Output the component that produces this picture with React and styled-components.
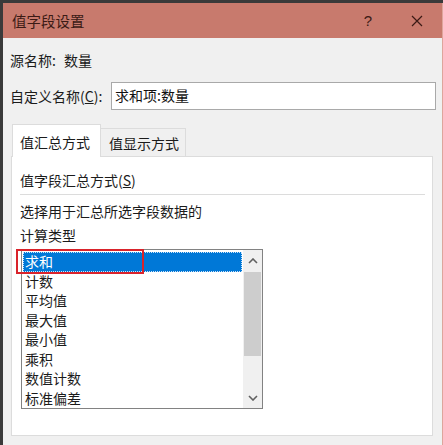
import styled, { createGlobalStyle } from 'styled-components';

const GlobalStyle = createGlobalStyle`
  html, body {
    margin: 0;
    padding: 0;
    background: #3a3a3a;
  }
  body {
    font-family: "Noto Sans CJK SC", "Noto Sans", "Liberation Sans", sans-serif;
    font-size: 14px;
    color: #1b1b1b;
  }
`;

const items = ['求和', '计数', '平均值', '最大值', '最小值', '乘积', '数值计数', '标准偏差'];

function App() {
  return (
    <Page>
      <GlobalStyle />
      <Window>
        <TitleBar>
          <Title>值字段设置</Title>
          <HelpBtn>?</HelpBtn>
          <CloseBtn>
            <svg width="12" height="12" viewBox="0 0 12 12">
              <path d="M1 1 L11 11 M11 1 L1 11" stroke="#3b1a15" strokeWidth="1.2" fill="none" />
            </svg>
          </CloseBtn>
        </TitleBar>

        <Content>
          <SourceRow>
            <span>源名称:</span>
            <SourceValue>数量</SourceValue>
          </SourceRow>

          <NameRow>
            <NameLabel>
              自定义名称(<u>C</u>):
            </NameLabel>
            <NameInput>求和项:数量</NameInput>
          </NameRow>
        </Content>

        <TabsArea>
          <TabRow>
            <Tab $active>值汇总方式</Tab>
            <Tab>值显示方式</Tab>
          </TabRow>
          <Panel>
            <SectionTitle>
              值字段汇总方式(<u>S</u>)
            </SectionTitle>
            <Separator />
            <Hint $first>选择用于汇总所选字段数据的</Hint>
            <Hint>计算类型</Hint>
            <ListBox>
              <Items>
                {items.map((it, i) => (
                  <Item key={it} $selected={i === 0}>
                    {it}
                  </Item>
                ))}
              </Items>
              <ScrollBar>
                <Arrow>
                  <svg width="10" height="6" viewBox="0 0 10 6">
                    <path d="M1 5 L5 1 L9 5" stroke="#606060" strokeWidth="1.6" fill="none" />
                  </svg>
                </Arrow>
                <Track>
                  <Thumb />
                </Track>
                <Arrow>
                  <svg width="10" height="6" viewBox="0 0 10 6">
                    <path d="M1 1 L5 5 L9 1" stroke="#606060" strokeWidth="1.6" fill="none" />
                  </svg>
                </Arrow>
              </ScrollBar>
              <Highlight />
            </ListBox>
          </Panel>
        </TabsArea>
      </Window>
    </Page>
  );
}

export default App;

const Page = styled.div`
  width: 443px;
  height: 445px;
  padding: 3px 0 0 3px;
  box-sizing: border-box;
  overflow: hidden;
`;

const Window = styled.div`
  width: 439px;
  height: 442px;
  background: #f0f0f0;
  border-right: 1px solid #dea59c;
  display: flex;
  flex-direction: column;
`;

const TitleBar = styled.div`
  height: 35px;
  background: #c87a6d;
  display: flex;
  align-items: center;
  padding-left: 9px;
  color: #3b1a15;
`;

const Title = styled.div`
  flex: 1;
  font-size: 14.5px;
  line-height: 20px;
`;

const HelpBtn = styled.div`
  width: 20px;
  font-family: "Liberation Sans", sans-serif;
  font-size: 15px;
  text-align: center;
  margin-right: 33px;
`;

const CloseBtn = styled.div`
  display: flex;
  align-items: center;
  margin-right: 19px;
`;

const Content = styled.div`
  padding: 0 6px 0 7px;
`;

const SourceRow = styled.div`
  margin-top: 12px;
  line-height: 20px;
  display: flex;
`;

const SourceValue = styled.span`
  margin-left: 8px;
`;

const NameRow = styled.div`
  margin-top: 12px;
  display: flex;
  align-items: center;
`;

const NameLabel = styled.div`
  width: 101px;
  line-height: 20px;
  flex-shrink: 0;
`;

const NameInput = styled.div`
  flex: 1;
  height: 28px;
  box-sizing: border-box;
  border: 1px solid #a9a9a9;
  background: #fff;
  padding-left: 3px;
  line-height: 24px;
  color: #111;
`;

const TabsArea = styled.div`
  margin: 14px 9px 0 8px;
  display: flex;
  flex-direction: column;
`;

const TabRow = styled.div`
  display: flex;
  align-items: flex-end;
  padding-left: 1px;
  position: relative;
  z-index: 1;
  margin-bottom: -1px;
`;

const Tab = styled.div`
  width: ${(p) => (p.$active ? '89px' : '85px')};
  height: ${(p) => (p.$active ? '33px' : '29px')};
  box-sizing: border-box;
  border: 1px solid #dcdcdc;
  border-bottom: ${(p) => (p.$active ? 'none' : '1px solid #dcdcdc')};
  border-left: ${(p) => (p.$active ? '1px solid #dcdcdc' : 'none')};
  background: ${(p) => (p.$active ? '#fff' : '#f0f0f0')};
  padding-left: ${(p) => (p.$active ? '7px' : '8px')};
  padding-top: ${(p) => (p.$active ? '7px' : '4px')};
  line-height: 20px;
`;

const Panel = styled.div`
  height: 280px;
  box-sizing: border-box;
  border: 1px solid #dcdcdc;
  background: #fff;
  padding: 0 7px 0 8px;
`;

const SectionTitle = styled.div`
  margin-top: 13px;
  line-height: 20px;
`;

const Separator = styled.div`
  margin-top: 4px;
  height: 1px;
  background: #dcdcdc;
`;

const Hint = styled.div`
  line-height: 24px;
  margin-top: ${(p) => (p.$first ? '4px' : '0')};
`;

const ListBox = styled.div`
  position: relative;
  margin-top: 2px;
  margin-left: 1px;
  width: 242px;
  height: 160px;
  box-sizing: border-box;
  border: 1px solid #828282;
  display: flex;
`;

const Items = styled.div`
  flex: 1;
  padding: 2px 1px 0 1px;
`;

const Item = styled.div`
  height: 19.5px;
  line-height: 19.5px;
  padding-left: 2px;
  color: ${(p) => (p.$selected ? '#fff' : '#1b1b1b')};
  background: ${(p) => (p.$selected ? '#0078d7' : 'transparent')};
  outline: ${(p) => (p.$selected ? '1px dotted #cfe4f8' : 'none')};
  outline-offset: -1px;
`;

const ScrollBar = styled.div`
  width: 19px;
  background: #f0f0f0;
  display: flex;
  flex-direction: column;
`;

const Arrow = styled.div`
  height: 21px;
  display: flex;
  align-items: center;
  justify-content: center;
  flex-shrink: 0;
`;

const Track = styled.div`
  flex: 1;
  padding: 1px 1px 0 1px;
`;

const Thumb = styled.div`
  height: 84px;
  background: #cdcdcd;
`;

const Highlight = styled.div`
  position: absolute;
  left: -6px;
  top: -1px;
  width: 128px;
  height: 25px;
  box-sizing: border-box;
  border: 2.5px solid #d9232b;
  pointer-events: none;
`;
